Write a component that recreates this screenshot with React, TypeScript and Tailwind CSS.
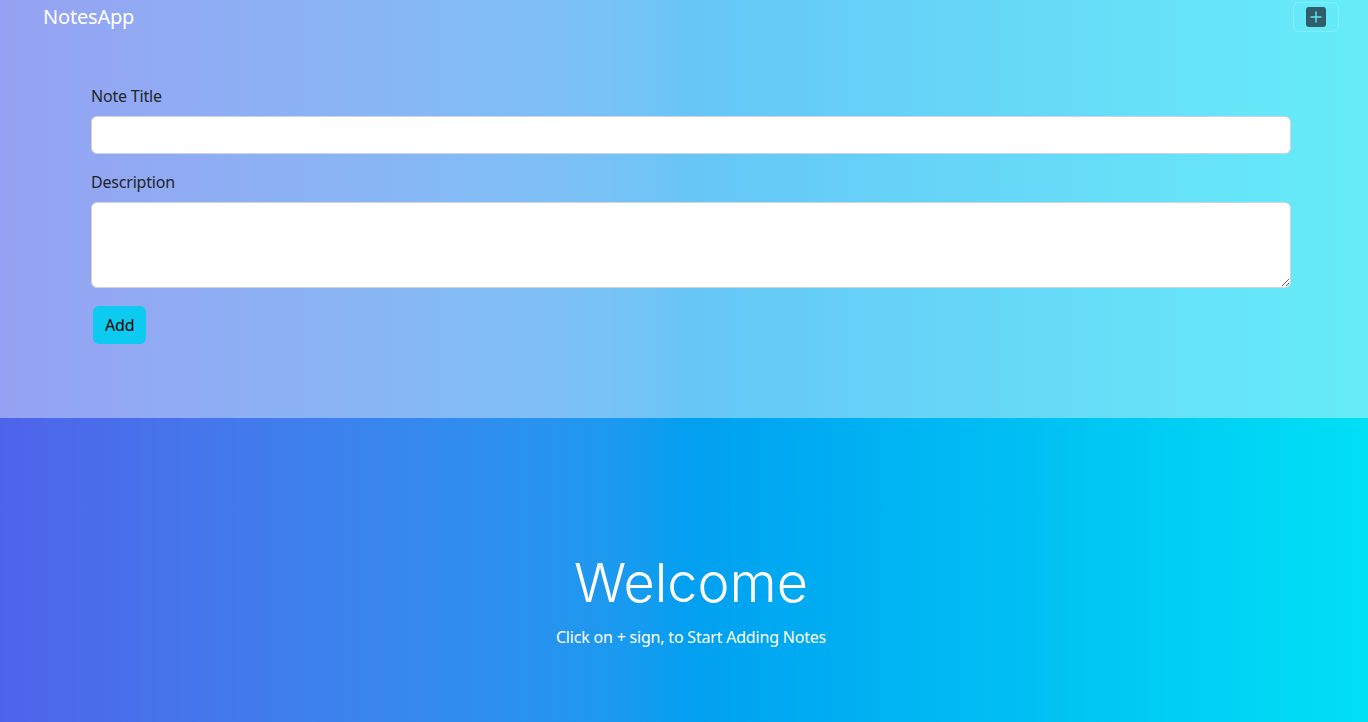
import React from "react";

export default function App() {
  return (
    <div className="w-[1368px] h-[722px] overflow-hidden text-[#212529] tracking-[-0.2px]" style={{ fontFamily: '"Noto Sans", "Open Sans", sans-serif' }}>
      <div className="relative h-[418px]">
        <div className="absolute inset-0 bg-gradient-to-r from-[#4e63ea] via-[#039ff0] to-[#00e0f5] opacity-60" />
        <div className="relative">
          <nav className="h-[33px] flex items-center justify-between pl-[43px] pr-[29px]">
            <span className="text-[20px] text-white leading-none">NotesApp</span>
            <button className="w-[46px] h-[30px] mt-[1px] rounded-[6px] border border-[#ffffff33] flex items-center justify-center">
              <span className="w-[20px] h-[20px] rounded-[3px] bg-[#2d5e6a] flex items-center justify-center">
                <svg width="14" height="14" viewBox="0 0 14 14">
                  <path d="M7 1.5V12.5M1.5 7H12.5" stroke="#6ae4f4" strokeWidth="1.4" />
                </svg>
              </span>
            </button>
          </nav>
          <div className="mx-[91px] mt-[51px] w-[1200px]">
            <label className="block text-[16px] leading-6 mb-2">Note Title</label>
            <input className="block w-full h-[38px] bg-white rounded-[6px] border border-[#ced4da] mb-4" />
            <label className="block text-[16px] leading-6 mb-2">Description</label>
            <textarea className="block w-full h-[86px] bg-white rounded-[6px] border border-[#ced4da]" />
            <button className="mt-[18px] ml-[2px] h-[38px] px-3 rounded-[6px] bg-[#0dcaf0] text-black text-[16px]">Add</button>
          </div>
        </div>
      </div>
      <div className="h-[304px] bg-gradient-to-r from-[#4e63ea] via-[#039ff0] to-[#00e0f5] flex flex-col items-center pt-[138px] pl-[14px] text-white">
        <h1 className="text-[54px] font-light leading-none tracking-normal" style={{ fontFamily: '"Inter", "Noto Sans", sans-serif' }}>Welcome</h1>
        <p className="text-[16px] mt-[15px]">Click on + sign, to Start Adding Notes</p>
      </div>
    </div>
  );
}
